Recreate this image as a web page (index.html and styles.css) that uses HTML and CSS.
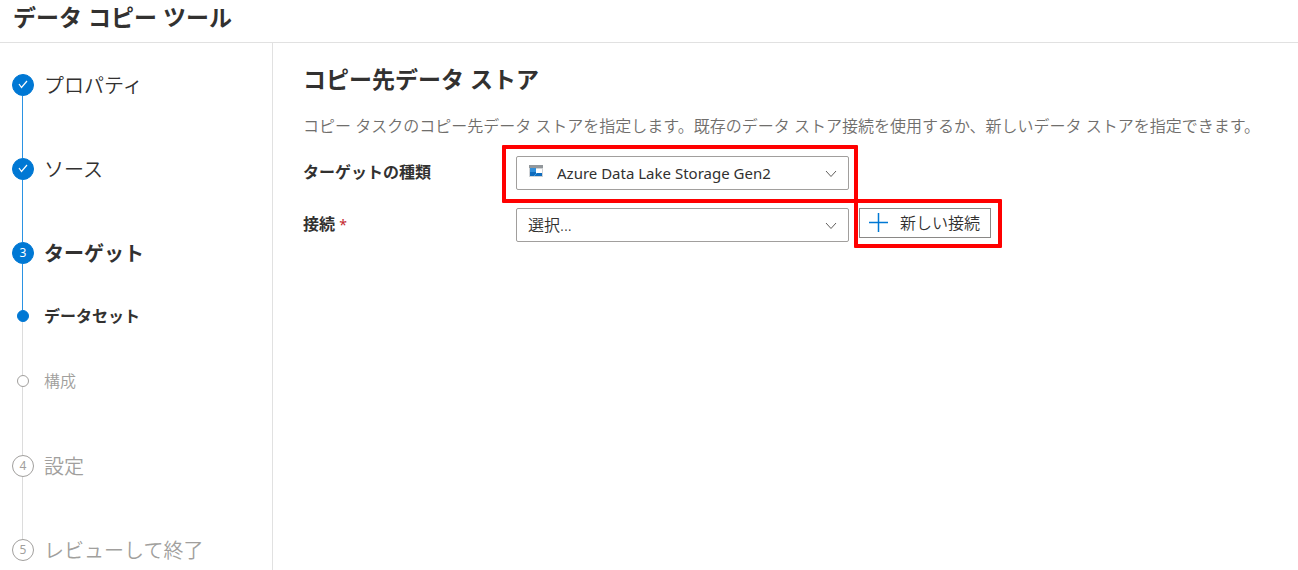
FILE: index.html
```html
<!DOCTYPE html>
<html lang="ja">
    <head>
        <meta charset="utf-8">
        <title>データ コピー ツール</title>
        <link rel="stylesheet" href="styles.css">
    </head>
    <body>
        <header>
            <h1>データ コピー ツール</h1>
        </header>
        <div class="layout">
            <nav>
                <ol class="steps">
                    <li class="done">
                        <div class="marker">
                            <span class="circle"><svg width="12" height="10" viewBox="0 0 12 10"><path d="M2 4 L4.5 7.5 L10 1" fill="none" stroke="#fff" stroke-width="1.2"/></svg></span>
                        </div>
                        <span class="name">プロパティ</span>
                    </li>
                    <li class="done">
                        <div class="marker">
                            <span class="circle"><svg width="12" height="10" viewBox="0 0 12 10"><path d="M2 4 L4.5 7.5 L10 1" fill="none" stroke="#fff" stroke-width="1.2"/></svg></span>
                        </div>
                        <span class="name">ソース</span>
                    </li>
                    <li class="done active">
                        <div class="marker"><span class="circle">3</span></div>
                        <span class="name">ターゲット</span>
                    </li>
                    <li class="sub active">
                        <div class="marker"><span class="circle"></span></div>
                        <span class="name">データセット</span>
                    </li>
                    <li class="sub last">
                        <div class="marker"><span class="circle"></span></div>
                        <span class="name">構成</span>
                    </li>
                    <li>
                        <div class="marker"><span class="circle">4</span></div>
                        <span class="name">設定</span>
                    </li>
                    <li>
                        <div class="marker"><span class="circle">5</span></div>
                        <span class="name">レビューして終了</span>
                    </li>
                </ol>
            </nav>
            <main>
                <h2>コピー先データ ストア</h2>
                <p>コピー タスクのコピー先データ ストアを指定します。既存のデータ ストア接続を使用するか、新しいデータ ストアを指定できます。</p>
                <form class="fields">
                    <label for="type">ターゲットの種類</label>
                    <div class="select with-icon marked">
                        <svg class="type-icon" width="14" height="12" viewBox="0 0 14 12">
                            <rect width="14" height="12" fill="#d0d3d6"/>
                            <rect width="14" height="3" fill="#92979b"/>
                            <rect x="1" y="3" width="6" height="4" fill="#2f8fdb"/>
                            <rect x="7" y="4" width="6" height="4" fill="#fff"/>
                            <path d="M1 7 H7 V8 H13 V11 H1 Z" fill="#0f6cbd"/>
                            <path d="M5 11 L8 8" stroke="#3a9be0"/>
                        </svg>
                        <select id="type">
                            <option>Azure Data Lake Storage Gen2</option>
                        </select>
                        <svg class="arrow" width="12" height="8" viewBox="0 0 12 8"><path d="M1 1 L6 6.5 L11 1" fill="none" stroke="#605e5c"/></svg>
                    </div>

                    <label for="connection">接続 <span class="required">*</span></label>
                    <div class="select">
                        <select id="connection">
                            <option>選択...</option>
                        </select>
                        <svg class="arrow" width="12" height="8" viewBox="0 0 12 8"><path d="M1 1 L6 6.5 L11 1" fill="none" stroke="#605e5c"/></svg>
                    </div>
                    <div class="new marked">
                        <button type="button">
                            <svg width="20" height="20" viewBox="0 0 20 20"><path d="M0 9.5 H19 M9.5 0 V19" stroke="#0078d4" stroke-width="1.5"/></svg>
                            新しい接続
                        </button>
                    </div>
                </form>
            </main>
        </div>
    </body>
</html>
```
FILE: styles.css
```css
*{
    box-sizing: border-box;
}
body{
    margin: 0;
    display: flex;
    flex-direction: column;
    min-height: 100vh;
    background: #fff;
    color: #323130;
    font-family: "Noto Sans", "Noto Sans CJK JP", sans-serif;
    font-size: 16px;
    font-weight: 350;
    line-height: 24px;
}
h1, h2, p{
    margin: 0;
}
h1, h2{
    font-size: 23px;
    line-height: 32px;
}
header{
    padding: 1px 13px 9px;
    border-bottom: 1px solid #e1e1e1;
}
.layout{
    display: flex;
    flex: 1;
}

/* wizard steps */
nav{
    flex: 0 0 273px;
    padding: 31px 12px 0;
    border-right: 1px solid #e1e1e1;
}
.steps{
    list-style: none;
    margin: 0;
    padding: 0;
    color: #a19f9d;
}
.steps li{
    display: flex;
    gap: 10px;
    height: 84px;
}
.marker{
    display: flex;
    flex-direction: column;
    align-items: center;
    width: 22px;
}
.marker:after{
    content: "";
    flex: 1;
    width: 1px;
    margin-right: 1px;
    background: #dcdcdc;
}
.circle{
    display: flex;
    align-items: center;
    justify-content: center;
    width: 22px;
    height: 22px;
    border: 1px solid #a19f9d;
    border-radius: 50%;
    font-size: 12px;
    font-weight: normal;
}
.name{
    font-size: 20px;
    line-height: 24px;
}
.steps .done{
    color: #323130;
}
.done .circle, .active .circle{
    background: #0078d4;
    border-color: #0078d4;
    color: #fff;
}
.done .marker:after{
    background: #2b93e3;
}
.steps .active{
    color: #323130;
    font-weight: bold;
}
.steps .done.active{
    height: 68px;
}
.steps .sub{
    height: 65px;
}
.steps .sub.last{
    height: 80px;
}
.sub .circle{
    width: 12px;
    height: 12px;
}
.sub .name{
    font-size: 16px;
    line-height: 12px;
}
.steps li:last-child{
    height: 22px;
}
li:last-child .marker:after{
    display: none;
}

/* form */
main{
    flex: 1;
    padding: 20px 12px 20px 30px;
}
main p{
    margin: 19px 0 18px;
    color: #706e6c;
}
.fields{
    display: grid;
    grid-template-columns: 203px minmax(0, 333px) auto;
    justify-content: start;
    gap: 18px 10px;
}
label{
    grid-column: 1;
    font-weight: bold;
    line-height: 32px;
}
.required{
    color: #c4262e;
    font-size: 14px;
    font-weight: normal;
}
.select, .new{
    position: relative;
}
select{
    display: block;
    appearance: none;
    width: 100%;
    height: 34px;
    padding: 0 32px 0 11px;
    border: 1px solid #a19f9d;
    border-radius: 2px;
    background: #fff;
    color: #323130;
    font: inherit;
}
.with-icon select{
    padding-left: 40px;
    font-size: 15px;
    font-weight: normal;
}
.arrow{
    position: absolute;
    top: 14px;
    right: 12px;
    pointer-events: none;
}
.type-icon{
    position: absolute;
    top: 9px;
    left: 13px;
}
.new{
    align-self: start;
}
button{
    display: flex;
    align-items: center;
    gap: 11px;
    height: 30px;
    padding: 0 10px 0 9px;
    border: 1px solid #8a8886;
    background: #fff;
    color: #323130;
    font: inherit;
}

/* red frames around the controls to use */
.marked:after{
    content: "";
    position: absolute;
    inset: -11px -9px -13px -14px;
    border: 4px solid #f00;
    border-radius: 1px;
    pointer-events: none;
}
.new.marked:after{
    inset: -9px -11px -10px -5px;
}
```
